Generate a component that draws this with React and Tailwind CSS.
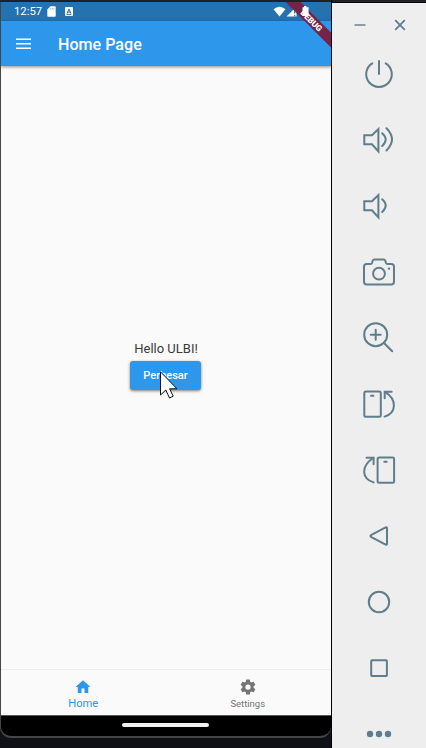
import React from "react";

function ToolIcon({ children }) {
  return (
    <div className="flex h-[66px] shrink-0 items-center justify-center">
      <svg width="36" height="36" viewBox="0 0 36 36" fill="none" stroke="#607d8b" strokeWidth="2" strokeLinecap="round" strokeLinejoin="round">
        {children}
      </svg>
    </div>
  );
}

const SPEAKER = "M3.3 13.2H11L17.4 7V29.3L11 22.3H3.3Z";

function EmulatorToolbar() {
  return (
    <aside className="flex h-[745px] w-[94px] shrink-0 flex-col overflow-hidden bg-[#eeeeee]">
      <div className="flex h-[38px] shrink-0 items-start pt-[15px] pl-[22px]">
        <svg width="12" height="14" viewBox="0 0 12 14" stroke="#7d95a1" strokeWidth="1.8">
          <path d="M.5 7H11.5" />
        </svg>
        <svg className="ml-7" width="12" height="14" viewBox="0 0 12 14" stroke="#607d8b" strokeWidth="1.8">
          <path d="M1.2 2.2L10.8 11.8M10.8 2.2L1.2 11.8" />
        </svg>
      </div>
      <ToolIcon>
        <path d="M11.3 7.3A12.8 12.8 0 1 0 24.7 7.3M18 5V18" />
      </ToolIcon>
      <ToolIcon>
        <path strokeLinejoin="miter" d={SPEAKER} />
        <path d="M21.2 11.2Q28.2 17.5 21.2 24M25.5 6.2Q36.5 17.3 25.5 28.5" />
      </ToolIcon>
      <ToolIcon>
        <path strokeLinejoin="miter" d={SPEAKER} />
        <path d="M21.2 11.2Q28.2 17.5 21.2 24" />
      </ToolIcon>
      <ToolIcon>
        <path d="M5.7 10H9.3Q10.7 10 11.1 8.8L11.7 6.8Q12.1 5.6 13.4 5.6H22.6Q23.9 5.6 24.3 6.8L24.9 8.8Q25.3 10 26.7 10H30.3Q33 10 33 12.7V27.8Q33 30.5 30.3 30.5H5.7Q3 30.5 3 27.8V12.7Q3 10 5.7 10Z" />
        <circle cx="18" cy="19.7" r="5.9" />
        <circle cx="28" cy="14.6" r="1.2" fill="#607d8b" stroke="none" />
      </ToolIcon>
      <ToolIcon>
        <circle cx="14.7" cy="14.7" r="11.5" />
        <path d="M23.2 23.2L31.2 31.2M14.7 9.7V19.7M9.7 14.7H19.7" />
      </ToolIcon>
      <ToolIcon>
        <rect x="3.3" y="5.4" width="16.5" height="25.3" rx="1.5" />
        <path d="M10 9.8H12.4M23.6 30.6C35.8 27 36 13.5 24.3 6.2" />
        <path strokeLinejoin="miter" d="M23.7 12.3V5.7H30.7" />
      </ToolIcon>
      <ToolIcon>
        <rect x="16.6" y="5.4" width="16.5" height="25.3" rx="1.5" />
        <path d="M23.3 9.8H25.7M12.6 30.4C.6 26.5 -.3 14.5 11.8 6.2" />
        <path strokeLinejoin="miter" d="M12.6 12.3V5.7H5.5" />
      </ToolIcon>
      <ToolIcon>
        <path d="M9.9 17.2L24.7 9.4Q26 8.9 26 10.3V25.7Q26 27.1 24.7 26.6L9.9 18.8Q9 18 9.9 17.2Z" />
      </ToolIcon>
      <ToolIcon>
        <circle cx="18" cy="18" r="10.2" />
      </ToolIcon>
      <ToolIcon>
        <rect x="10.2" y="10.2" width="15.7" height="15.7" rx="0.7" />
      </ToolIcon>
      <ToolIcon>
        <g fill="#607d8b" stroke="none">
          <circle cx="9" cy="18" r="3.2" />
          <circle cx="18" cy="18" r="3.2" />
          <circle cx="27" cy="18" r="3.2" />
        </g>
      </ToolIcon>
    </aside>
  );
}

function StatusBar() {
  return (
    <div className="flex h-[19px] items-center bg-[#2472af] pl-[13px] text-[11.3px] text-white">
      <span className="w-[29px] pt-px whitespace-nowrap">12:57</span>
      <svg className="ml-1" width="9" height="11" viewBox="0 0 9 11" fill="#fff">
        <path d="M3.3.3H8Q8.7.3 8.7 1V10Q8.7 10.7 8 10.7H1Q.3 10.7.3 10V3.5Z" />
        <path d="M3.6 2V3.6M5.3 2V3.6M7 2V3.6" stroke="#86b4dc" strokeWidth=".8" />
      </svg>
      <svg className="ml-[9px]" width="8" height="9" viewBox="0 0 8 9">
        <rect width="8" height="9" rx="1" fill="#fff" />
        <path d="M2 6.6L4 2.1L6 6.6M2.8 5.1H5.2M1.6 7.6H6.4" stroke="#2472af" strokeWidth="1" fill="none" />
      </svg>
      <svg className="ml-auto" width="13" height="11" viewBox="0 0 13 11" fill="#fff">
        <path d="M.5 3.3Q6.5-1.9 12.5 3.3L6.5 10.5Z" />
      </svg>
      <svg width="11" height="11" viewBox="0 0 11 11">
        <path d="M.5 10.5L10.5.5V10.5Z" fill="#fff" />
        <path d="M8.7 3V7.5M8.7 8.8V10.5" stroke="#2472af" strokeWidth="1.2" />
      </svg>
      <div className="w-[34px]" />
    </div>
  );
}

function DebugBanner() {
  return (
    <svg className="absolute top-0 right-0 z-20" width="50" height="50" viewBox="0 0 50 50">
      <path d="M4.5 0H19.5L50 30.5V45.5Z" fill="#752348" />
      <text x="0" y="0" transform="translate(30.4 18.6) rotate(45)" textAnchor="middle" dominantBaseline="central" fill="#fff" fontSize="8.3" fontWeight="900" fontFamily="Roboto, sans-serif">DEBUG</text>
      <path d="M21.5 5.2H23.1V4H25.4V5.2H27.6V14H21.5Z" fill="#fff" />
    </svg>
  );
}

function Phone() {
  return (
    <main className="relative flex h-[736px] w-[331px] shrink-0 flex-col overflow-hidden rounded-b-[11px] border-b-2 border-l border-[#444546] bg-black">
      <StatusBar />
      <header className="z-10 flex h-[45px] items-center bg-[#2d98eb] pl-[15px] text-white shadow-[0_1px_3px_rgba(0,0,0,0.45)]">
        <svg width="16" height="12" viewBox="0 0 16 12" stroke="#fff" strokeWidth="1.5">
          <path d="M0 1.2H15M0 5.7H15M0 10.2H15" />
        </svg>
        <h1 className="ml-[26px] pt-[3px] text-[16.1px] font-medium">Home Page</h1>
      </header>
      <section className="flex h-[603px] flex-col items-center bg-[#fafafa] pt-[274px] pr-px">
        <p className="pl-px text-[13px] leading-[18px] text-[#3a3a3a]">Hello ULBI!</p>
        <button className="mt-[3px] h-[29px] w-[71px] rounded-[3px] bg-[#2d98eb] pt-[2px] text-[11px] font-medium text-white shadow-[0_1px_3px_rgba(0,0,0,0.5)]">Perbesar</button>
      </section>
      <nav className="grid h-[46px] grid-cols-2 border-t border-[#eeeeee] bg-[#fafafa] pr-px">
        <div className="flex flex-col items-center pt-[8px] text-[#2d98eb]">
          <svg width="18" height="18" viewBox="0 0 24 24" fill="currentColor">
            <path d="M10 20v-6h4v6h5v-8h3L12 3 2 12h3v8z" />
          </svg>
          <span className="pt-px text-[11.2px] leading-[14px]">Home</span>
        </div>
        <div className="flex flex-col items-center pt-[8px] text-[#757575]">
          <svg width="18" height="18" viewBox="0 0 24 24" fill="currentColor">
            <path d="M19.43 12.98c.04-.32.07-.64.07-.98s-.03-.66-.07-.98l2.11-1.65c.19-.15.24-.42.12-.64l-2-3.46c-.12-.22-.39-.3-.61-.22l-2.49 1c-.52-.4-1.08-.73-1.69-.98l-.38-2.65C14.46 2.18 14.25 2 14 2h-4c-.25 0-.46.18-.49.42l-.38 2.65c-.61.25-1.17.59-1.69.98l-2.49-1c-.23-.09-.49 0-.61.22l-2 3.46c-.13.22-.07.49.12.64l2.11 1.65c-.04.32-.07.65-.07.98s.03.66.07.98l-2.11 1.65c-.19.15-.24.42-.12.64l2 3.46c.12.22.39.3.61.22l2.49-1c.52.4 1.08.73 1.69.98l.38 2.65c.03.24.24.42.49.42h4c.25 0 .46-.18.49-.42l.38-2.65c.61-.25 1.17-.59 1.69-.98l2.49 1c.23.09.49 0 .61-.22l2-3.46c.12-.22.07-.49-.12-.64zM12 15.5A3.5 3.5 0 1 1 12 8.5a3.5 3.5 0 0 1 0 7z" />
          </svg>
          <span className="text-[9.5px] leading-[15px]">Settings</span>
        </div>
      </nav>
      <div className="flex h-[21px] justify-center border-t border-[#555] pt-[7px] pr-px">
        <div className="h-[4px] w-[87px] rounded-full bg-[#f0f0f0]" />
      </div>
      <DebugBanner />
      <svg className="absolute top-[368px] left-[158px]" width="20" height="30" viewBox="0 0 20 30">
        <path d="M1.5 1.8V25L6.8 20L10.5 28L14.2 26.2L10.6 18.8H18Z" fill="#fff" stroke="#111" strokeWidth="1" />
      </svg>
    </main>
  );
}

export default function App() {
  return (
    <div className="flex h-[748px] w-[426px] overflow-hidden bg-[#101117] font-['Roboto',sans-serif]">
      <div className="h-full w-[331px] shrink-0 border-t-2 border-[#202125]">
        <Phone />
      </div>
      <div className="w-px bg-black" />
      <div className="h-full w-[94px] border-t-2 border-[#202125]">
        <div className="h-px bg-black" />
        <EmulatorToolbar />
      </div>
    </div>
  );
}
